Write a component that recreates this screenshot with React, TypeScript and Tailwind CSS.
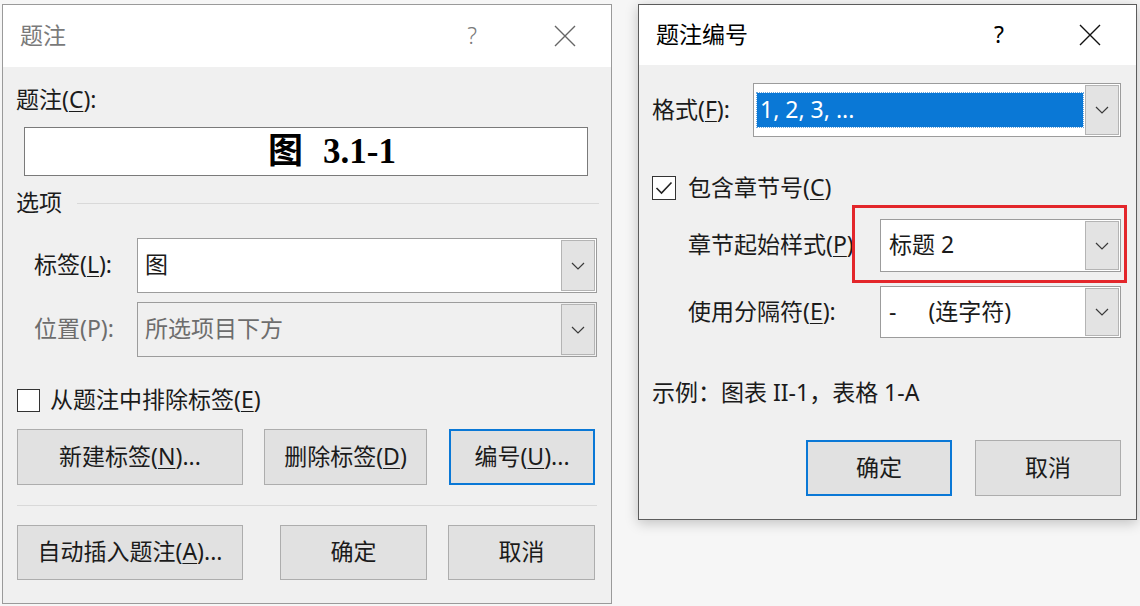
import type { ReactNode } from "react";

const Chevron = () => (
  <svg width="14" height="8" viewBox="0 0 14 8" fill="none" stroke="#3a3a3a" strokeWidth="1.2">
    <path d="M1 1l6 6 6-6" />
  </svg>
);

const CloseIcon = ({ color }: { color: string }) => (
  <svg width="22" height="22" viewBox="0 0 22 22" fill="none" stroke={color} strokeWidth="1.4">
    <path d="M1 1l20 20M21 1L1 21" />
  </svg>
);

function Combo({
  width,
  height,
  disabled,
  children,
}: {
  width: string;
  height: string;
  disabled?: boolean;
  children: ReactNode;
}) {
  return (
    <div
      className={`flex border border-[#9c9c9c] ${width} ${height} ${
        disabled ? "bg-[#f0f0f0]" : "bg-white"
      }`}
    >
      <div className="flex-1 min-w-0 flex items-center pb-[3px]">{children}</div>
      <div className="w-[34px] m-px ml-0 flex items-center justify-center bg-[#e3e3e3] border border-[#b4b4b4]">
        <Chevron />
      </div>
    </div>
  );
}

function Button({
  width,
  height,
  focused,
  children,
}: {
  width: string;
  height: string;
  focused?: boolean;
  children: ReactNode;
}) {
  return (
    <div
      className={`flex items-center justify-center pb-[3px] bg-[#e1e1e1] ${width} ${height} ${
        focused ? "border-2 border-[#0a78d6]" : "border border-[#adadad]"
      }`}
    >
      {children}
    </div>
  );
}

function Checkbox({ checked, size }: { checked?: boolean; size: string }) {
  return (
    <div className={`${size} border-[1.5px] border-[#333] bg-white flex items-center justify-center`}>
      {checked && (
        <svg width="18" height="14" viewBox="0 0 18 14" fill="none" stroke="#222" strokeWidth="1.6">
          <path d="M1.5 7l5 5L16.5 1.5" />
        </svg>
      )}
    </div>
  );
}

const Key = ({ children }: { children: ReactNode }) => (
  <u className="decoration-1 underline-offset-[3px]">{children}</u>
);

function CaptionDialog() {
  return (
    <div className="w-[610px] h-[600px] border border-[#9a9a9a] bg-[#f0f0f0] flex flex-col">
      {/* title bar, inactive window */}
      <div className="h-[62px] bg-white flex items-center text-[#7a7a7a]">
        <span className="ml-[17px] pb-[3px]">题注</span>
        <span className="ml-auto pb-[3px] font-light">?</span>
        <span className="ml-[77px] mr-[35px]">
          <CloseIcon color="#666" />
        </span>
      </div>

      <div className="mt-[18px] ml-[13px] h-[30px] flex items-center pb-[3px]">
        题注(<Key>C</Key>):
      </div>

      <div className="mt-[12px] ml-[21px] w-[564px] h-[49px] border border-[#7a7a7a] bg-white flex items-center pl-[243px] font-['Liberation_Serif','Noto_Sans_CJK_SC',serif] font-bold text-[35px] text-black">
        <span>图</span>
        <span className="ml-[20px]">3.1-1</span>
      </div>

      <div className="mt-[12px] h-[30px] flex items-center">
        <span className="ml-[13px] pb-[3px]">选项</span>
        <div className="flex-1 h-px bg-[#d9d9d9] ml-[15px] mr-[12px]" />
      </div>

      <div className="mt-[20px] flex items-center">
        <div className="w-[134px] pl-[31px] pb-[3px]">
          标签(<Key>L</Key>):
        </div>
        <Combo width="w-[460px]" height="h-[55px]">
          <span className="pl-[7px]">图</span>
        </Combo>
      </div>

      <div className="mt-[9px] flex items-center text-[#6d6d6d]">
        <div className="w-[134px] pl-[31px] pb-[3px]">位置(P):</div>
        <Combo width="w-[460px]" height="h-[55px]" disabled>
          <span className="pl-[7px]">所选项目下方</span>
        </Combo>
      </div>

      <div className="mt-[28px] h-[30px] flex items-center">
        <div className="ml-[14px]">
          <Checkbox size="w-[23px] h-[23px]" />
        </div>
        <span className="ml-[10px] pb-[3px]">
          从题注中排除标签(<Key>E</Key>)
        </span>
      </div>

      <div className="mt-[14px] flex">
        <div className="ml-[14px]">
          <Button width="w-[226px]" height="h-[56px]">
            新建标签(<Key>N</Key>)...
          </Button>
        </div>
        <div className="ml-[21px]">
          <Button width="w-[163px]" height="h-[56px]">
            删除标签(<Key>D</Key>)
          </Button>
        </div>
        <div className="ml-[22px]">
          <Button width="w-[146px]" height="h-[56px]" focused>
            编号(<Key>U</Key>)...
          </Button>
        </div>
      </div>

      <div className="mt-[20px] ml-[14px] w-[580px] h-px bg-[#d9d9d9]" />

      <div className="mt-[19px] flex">
        <div className="ml-[14px]">
          <Button width="w-[226px]" height="h-[55px]">
            自动插入题注(<Key>A</Key>)...
          </Button>
        </div>
        <div className="ml-[37px]">
          <Button width="w-[147px]" height="h-[55px]">
            确定
          </Button>
        </div>
        <div className="ml-[21px]">
          <Button width="w-[147px]" height="h-[55px]">
            取消
          </Button>
        </div>
      </div>
    </div>
  );
}

function NumberingDialog() {
  return (
    <div className="relative w-[499px] h-[516px] border border-[#5c5c5c] bg-[#f0f0f0] flex flex-col shadow-[0_3px_12px_rgba(0,0,0,0.22)]">
      {/* title bar, active window */}
      <div className="h-[60px] bg-white flex items-center text-black">
        <span className="ml-[17px] pb-[3px]">题注编号</span>
        <span className="ml-auto pb-[3px]">?</span>
        <span className="ml-[75px] mr-[35px]">
          <CloseIcon color="#111" />
        </span>
      </div>

      <div className="mt-[18px] flex items-center">
        <div className="w-[114px] pl-[13px] pb-[3px]">
          格式(<Key>F</Key>):
        </div>
        <Combo width="w-[368px]" height="h-[54px]">
          <div className="ml-[3px] mr-[2px] mt-[3px] flex-1 h-[34px] bg-[#0a78d6] outline-1 outline-dotted outline-[#6fa8dc] text-white flex items-center pl-[3px] pb-[3px]">
            1, 2, 3, ...
          </div>
        </Combo>
      </div>

      <div className="mt-[36px] h-[30px] flex items-center">
        <div className="ml-[13px]">
          <Checkbox checked size="w-[24px] h-[24px]" />
        </div>
        <span className="ml-[12px] pb-[3px]">
          包含章节号(<Key>C</Key>)
        </span>
      </div>

      <div className="mt-[16px] flex items-center">
        <div className="w-[241px] pl-[49px] pb-[3px]">
          章节起始样式(<Key>P</Key>)
        </div>
        <Combo width="w-[241px]" height="h-[53px]">
          <span className="pl-[8px]">标题 2</span>
        </Combo>
      </div>

      <div className="mt-[14px] flex items-center">
        <div className="w-[241px] pl-[49px] pb-[3px]">
          使用分隔符(<Key>E</Key>):
        </div>
        <Combo width="w-[241px]" height="h-[52px]">
          <span className="pl-[8px]">-</span>
          <span className="pl-[32px]">(连字符)</span>
        </Combo>
      </div>

      <div className="mt-[40px] h-[30px] ml-[13px] flex items-center pb-[3px]">
        示例：图表 II-1，表格 1-A
      </div>

      <div className="mt-[32px] flex">
        <div className="ml-[167px]">
          <Button width="w-[146px]" height="h-[56px]" focused>
            确定
          </Button>
        </div>
        <div className="ml-[23px]">
          <Button width="w-[146px]" height="h-[56px]">
            取消
          </Button>
        </div>
      </div>

      {/* red highlight around the chapter style field */}
      <div className="absolute left-[213px] top-[200px] w-[275px] h-[78px] border-[3px] border-[#e3262b]" />
    </div>
  );
}

export default function App() {
  return (
    <div className="w-[1140px] h-[606px] bg-[#f6f6f6] font-['Noto_Sans','Noto_Sans_CJK_SC',sans-serif] text-[23px] leading-[30px] text-[#1b1b1b] flex items-start pt-[4px] pl-[2px]">
      <CaptionDialog />
      <div className="ml-[26px]">
        <NumberingDialog />
      </div>
    </div>
  );
}
